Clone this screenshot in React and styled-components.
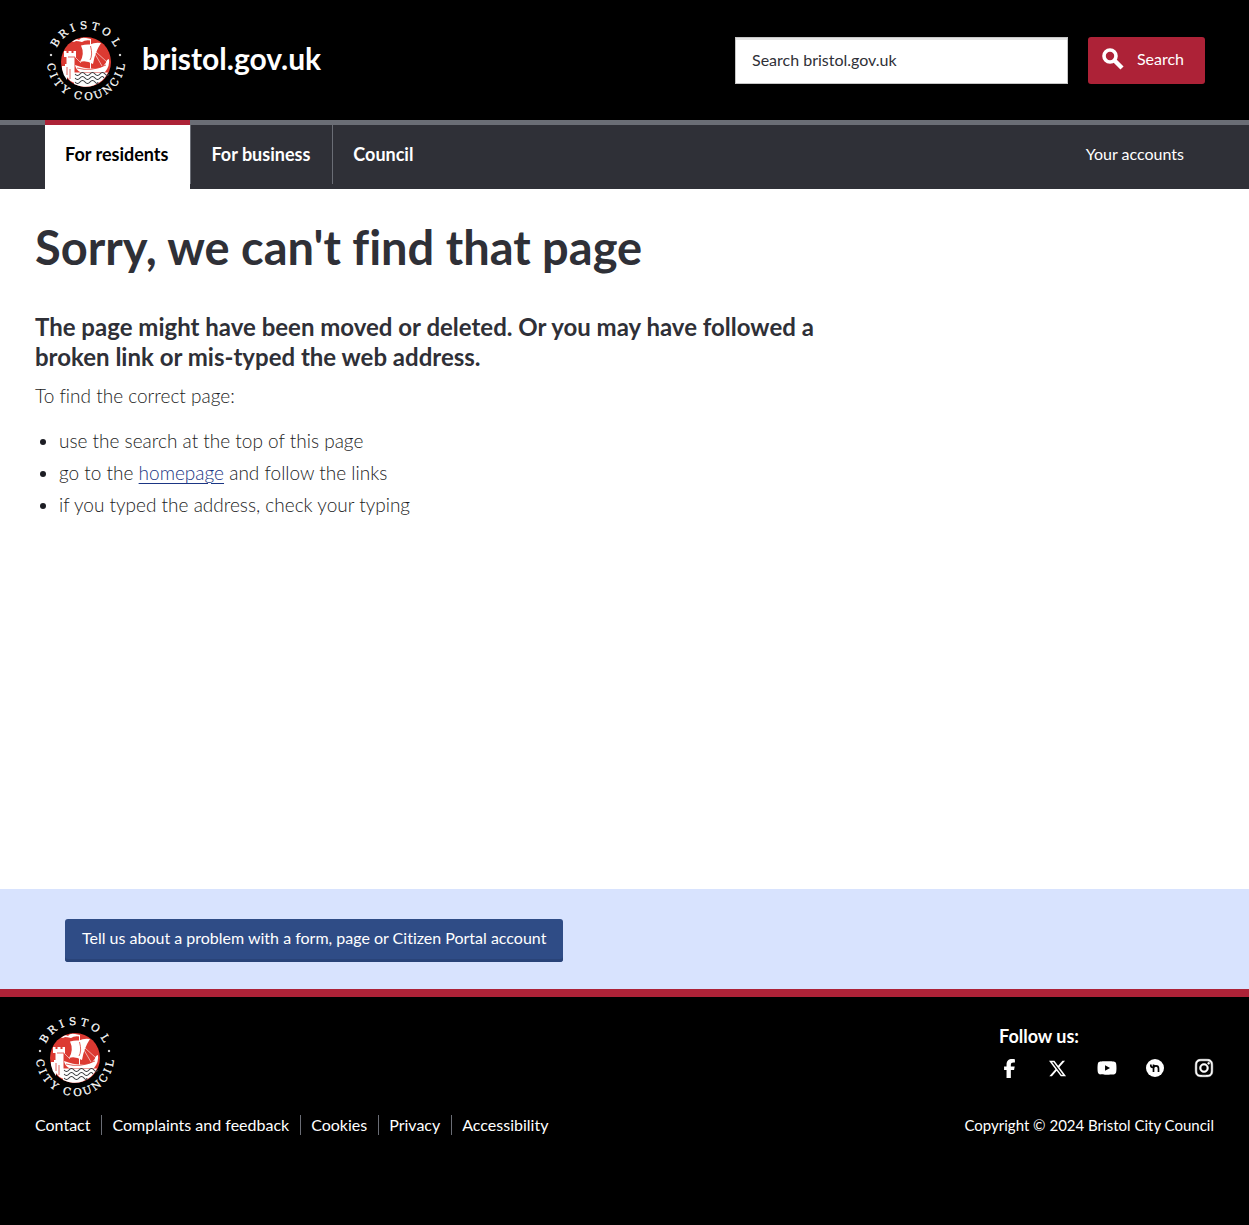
import React from "react";
import styled, { createGlobalStyle } from "styled-components";
import { FaFacebookF, FaXTwitter, FaYoutube, FaInstagram } from "react-icons/fa6";

const GlobalStyle = createGlobalStyle`
  *, *::before, *::after { box-sizing: border-box; }
  body {
    margin: 0;
    background: #fff;
    color: #2f3037;
    font-family: Lato, "Open Sans", sans-serif;
    font-size: 19px;
    line-height: 32px;
    font-variant-ligatures: none;
  }
  a { color: inherit; text-decoration: none; }
  h1, h2, p, ul { margin: 0; padding: 0; }
  button, input { font: inherit; }
`;

const Page = styled.div`
  min-height: 100vh;
  display: flex;
  flex-direction: column;
`;

const Header = styled.header`
  background: #000;
  color: #fff;
`;

const HeaderInner = styled.div`
  display: flex;
  flex-wrap: wrap;
  align-items: center;
  justify-content: space-between;
  gap: 20px;
  min-height: 120px;
  padding: 0 44px 0 46px;
`;

const Brand = styled.a`
  display: flex;
  align-items: center;
  gap: 16px;
  font-size: 30px;
  font-weight: 700;
  line-height: 36px;
`;

const BrandName = styled.span`
  padding-bottom: 4px;
`;

const SearchForm = styled.form`
  display: flex;
  gap: 20px;
`;

const HiddenLabel = styled.label`
  position: absolute;
  opacity: 0;
  pointer-events: none;
  white-space: nowrap;
  font-size: 16px;
`;

const SearchInput = styled.input`
  width: 333px;
  height: 47px;
  padding: 0 16px 2px;
  border: 1px solid #c6c6c6;
  border-radius: 0;
  box-shadow: inset 0 2px 0 #e6e6e6;
  background: #fff;
  color: #2f3037;
  font-size: 16px;
  &::placeholder { color: #2f3037; opacity: 1; }
`;

const SearchButton = styled.button`
  display: flex;
  align-items: center;
  justify-content: space-between;
  width: 117px;
  height: 47px;
  padding: 0 21px 2px 14px;
  border: 0;
  border-radius: 3px;
  background: #ad2237;
  color: #fff;
  font-size: 16px;
  cursor: pointer;
`;

const NavBar = styled.nav`
  display: flex;
  justify-content: space-between;
  padding: 0 45px;
  height: 69px;
  background: linear-gradient(#6a6d75 5px, #2f3037 5px);
  color: #fff;
`;

const Tabs = styled.div`
  display: flex;
`;

const Tab = styled.a`
  height: ${(p) => (p.$active ? 69 : 64)}px;
  padding: 13px 22px 0 20px;
  border-top: 5px solid ${(p) => (p.$active ? "#ad2237" : "#6a6d75")};
  border-left: ${(p) => (p.$active ? "0" : "1px solid #6a6d75")};
  background: ${(p) => (p.$active ? "#fff" : "transparent")};
  color: ${(p) => (p.$active ? "#000" : "#fff")};
  font-size: 18px;
  font-weight: 700;
`;

const AccountLink = styled.a`
  padding: 18px 20px 0;
  font-size: 16px;
`;

const Main = styled.main`
  flex: 1;
  padding: 28px 35px;
`;

const Title = styled.h1`
  font-size: 47px;
  font-weight: 700;
  line-height: 60px;
`;

const Lead = styled.h2`
  max-width: 786px;
  margin: 35px 0 8px;
  font-size: 24px;
  font-weight: 700;
  line-height: 30px;
`;

const Text = styled.p`
  color: #1c1d24;
  font-weight: 300;
`;

const Tips = styled.ul`
  margin-top: 13px;
  padding-left: 24px;
  color: #1c1d24;
  font-weight: 300;
`;

const TextLink = styled.a`
  color: #1b3684;
  text-decoration: underline;
  text-decoration-thickness: 1px;
  text-underline-offset: 3px;
`;

const Feedback = styled.section`
  padding: 30px 65px 27px;
  background: #d8e3fe;
`;

const FeedbackButton = styled.a`
  display: inline-block;
  padding: 3px 17px 8px;
  border-radius: 3px;
  background: #2f4c86;
  box-shadow: inset 0 -3px 0 #294378;
  color: #fff;
  font-size: 16px;
  vertical-align: top;
`;

const Footer = styled.footer`
  padding: 18px 35px 84px;
  border-top: 8px solid #ad2237;
  background: #000;
  color: #fff;
  font-size: 16px;
`;

const FooterRow = styled.div`
  display: flex;
  flex-wrap: wrap;
  align-items: ${(p) => p.$align || "center"};
  justify-content: space-between;
  gap: 12px;
  margin-bottom: ${(p) => p.$after || 0}px;
`;

const Follow = styled.div`
  width: 215px;
  padding-top: 5px;
`;

const FollowTitle = styled.p`
  font-size: 18px;
  font-weight: 700;
`;

const SocialList = styled.div`
  display: flex;
  justify-content: space-between;
  align-items: center;
`;

const SocialLink = styled.a`
  display: flex;
  justify-content: center;
  width: 20px;
  height: 32px;
  align-items: center;
`;

const FooterLinks = styled.nav`
  display: flex;
  flex-wrap: wrap;
`;

const FooterLink = styled.a`
  line-height: 20px;
  padding: 0 11px 0 10px;
  border-left: 1px solid #6a6d75;
  &:first-child { padding-left: 0; border-left: 0; }
`;

const Copyright = styled.p`
  font-size: 15px;
`;

const topLetters = [["B", -59], ["R", -40], ["I", -22], ["S", -4], ["T", 15], ["O", 35], ["L", 58]];
const bottomLetters = [
  ["C", 80], ["I", 66], ["T", 52], ["Y", 36], ["C", 13], ["O", -4],
  ["U", -20], ["N", -37], ["C", -53], ["I", -67], ["L", -80],
];

function CouncilLogo() {
  return (
    <svg width="80" height="82" viewBox="-40 -42 80 82" role="img" aria-label="Bristol City Council">
      <g fill="#fff" stroke="#fff" strokeWidth=".25" fontFamily="'DejaVu Serif', serif" fontSize="10.500" fontWeight="400" textAnchor="middle">
        {topLetters.map(([ch, a]) => (
          <text key={a} y="-32" transform={`rotate(${a})`}>{ch}</text>
        ))}
        {bottomLetters.map(([ch, a]) => (
          <text key={a} y="39" transform={`rotate(${a})`}>{ch}</text>
        ))}
        <circle cx="-35" cy="-6" r="1" />
        <circle cx="34" cy="-6" r="1" />
      </g>
      <circle cy="1" r="25" fill="#dc3a32" />
      <path d="M-12 11.500H22A25 25 0 0 1-12 23z" fill="#fff" />
      <g fill="none" stroke="#35383c" strokeWidth="1.100">
        <path d="M-11 13q2.500 3 5 0t5 0 5 0 5 0 5 0 5 0 4 0" />
        <path d="M-11 17q2.500 3 5 0t5 0 5 0 5 0 5 0 4 0" />
        <path d="M-11 21q2.500 3 5 0t5 0 5 0 5 0 3 0" />
      </g>
      <g fill="#fff">
        <path d="M-22-10h2.500v2h2v-2h3v2h2v-2H-10v6h-1.500V22l-4-2-4-4.500V-4H-22z" />
        <path d="M-24 5h3v-2h2v16q-4-5-5-11z" />
        <path d="M-5-15.500Q0-17 4-16.500 9-19 15-18 9-9 7 3 0-1-6 1-1-7-5-15.500z" />
        <path d="M-14-19q4-4 7-2 2-3 7-2l5 1v1.500q-6-1-9 1.500-4-1-6-1-1 1-4 1z" />
        <path d="M4-21h1V8H4z" />
        <path d="M-11 4Q2 9 12 7q7-1 9-8l2-1q1 7-4 13H-6q-4-2-5-7z" />
      </g>
      <g stroke="#fff" strokeWidth=".6" fill="none">
        <path d="M10-9l11 10M9-7l7 12M-5 2l-6-6" />
      </g>
      <g stroke="#dc3a32" strokeWidth=".8" fill="none">
        <path d="M-9 7Q5 11 20 4M4.500-15Q7-6 4-1M-18-4h7M-16 8v10M-19 6v8" />
      </g>
    </svg>
  );
}

function SearchIcon() {
  return (
    <svg width="22" height="22" viewBox="0 0 22 22" fill="none" stroke="#fff" aria-hidden="true">
      <circle cx="8" cy="8" r="6" strokeWidth="3.600" />
      <path d="M12.500 12.500l7.500 7.500" strokeWidth="4.400" />
    </svg>
  );
}

function NextdoorIcon() {
  return (
    <svg width="18" height="18" viewBox="0 0 18 18" aria-hidden="true">
      <circle cx="9" cy="9" r="9" fill="#fff" />
      <path d="M4.800 5.500v.8q0 2 2.200 2.200M7.500 13V5.500M7.500 9.500q0-2.600 2.500-2.600t2.500 2.600V13" fill="none" stroke="#000" strokeWidth="1.700" />
    </svg>
  );
}

const socials = [
  ["Facebook", <FaFacebookF size={19} />],
  ["X", <FaXTwitter size={19} />],
  ["YouTube", <FaYoutube size={20} />],
  ["Nextdoor", <NextdoorIcon />],
  ["Instagram", <FaInstagram size={20} stroke="#fff" strokeWidth={14} />],
];

const footerLinks = ["Contact", "Complaints and feedback", "Cookies", "Privacy", "Accessibility"];

export default function App() {
  return (
    <Page>
      <GlobalStyle />
      <Header>
        <HeaderInner>
          <Brand href="#">
            <CouncilLogo />
            <BrandName>bristol.gov.uk</BrandName>
          </Brand>
          <SearchForm role="search" onSubmit={(e) => e.preventDefault()}>
            <HiddenLabel htmlFor="site-search">Search bristol.gov.uk</HiddenLabel>
            <SearchInput id="site-search" type="text" placeholder="Search bristol.gov.uk" />
            <SearchButton type="submit">
              <SearchIcon />
              Search
            </SearchButton>
          </SearchForm>
        </HeaderInner>
        <NavBar aria-label="Main">
          <Tabs>
            <Tab href="#" $active aria-current="page">For residents</Tab>
            <Tab href="#">For business</Tab>
            <Tab href="#">Council</Tab>
          </Tabs>
          <AccountLink href="#">Your accounts</AccountLink>
        </NavBar>
      </Header>
      <Main>
        <Title>Sorry, we can't find that page</Title>
        <Lead>
          The page might have been moved or deleted. Or you may have followed a broken link or
          mis-typed the web address.
        </Lead>
        <Text>To find the correct page:</Text>
        <Tips>
          <li>use the search at the top of this page</li>
          <li>go to the <TextLink href="#">homepage</TextLink> and follow the links</li>
          <li>if you typed the address, check your typing</li>
        </Tips>
      </Main>
      <Feedback>
        <FeedbackButton href="#">
          Tell us about a problem with a form, page or Citizen Portal account
        </FeedbackButton>
      </Feedback>
      <Footer>
        <FooterRow $align="flex-start" $after={12}>
          <CouncilLogo />
          <Follow>
            <FollowTitle>Follow us:</FollowTitle>
            <SocialList>
              {socials.map(([name, icon]) => (
                <SocialLink key={name} href="#" aria-label={name}>{icon}</SocialLink>
              ))}
            </SocialList>
          </Follow>
        </FooterRow>
        <FooterRow>
          <FooterLinks aria-label="Footer">
            {footerLinks.map((name) => (
              <FooterLink key={name} href="#">{name}</FooterLink>
            ))}
          </FooterLinks>
          <Copyright>Copyright © 2024 Bristol City Council</Copyright>
        </FooterRow>
      </Footer>
    </Page>
  );
}
